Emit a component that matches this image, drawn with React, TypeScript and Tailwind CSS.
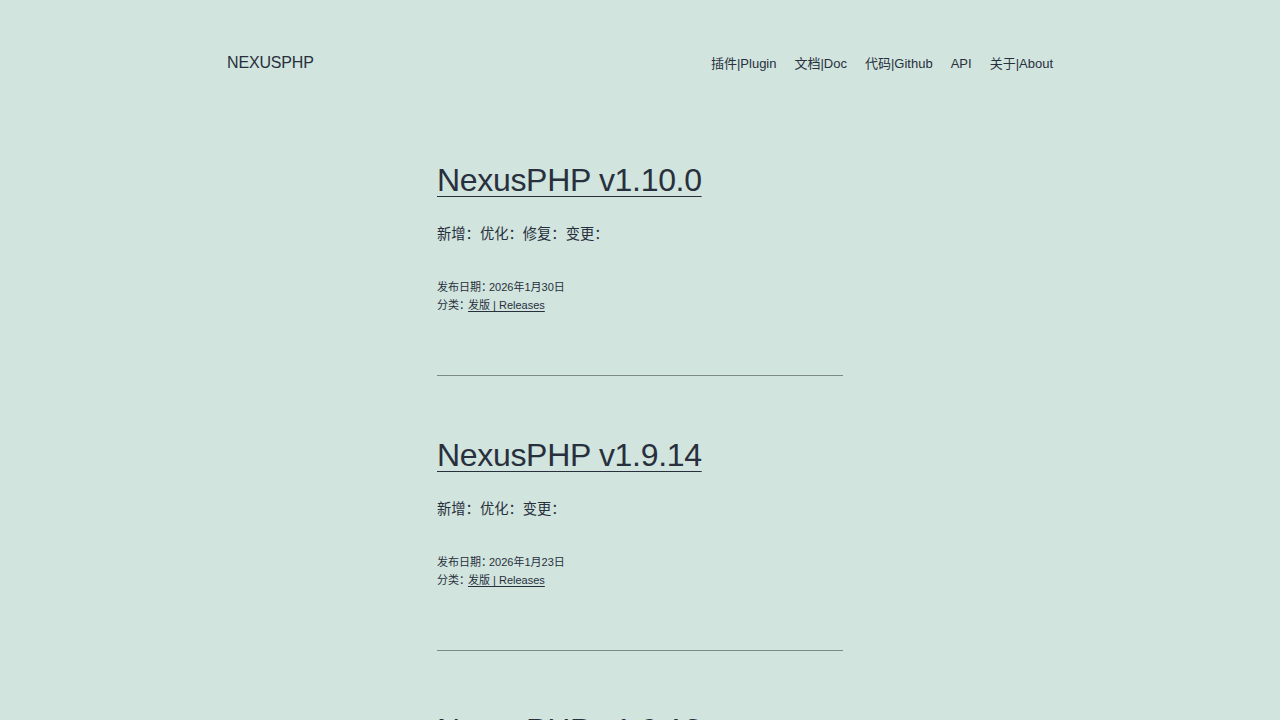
const posts = [
  { title: "NexusPHP v1.10.0", body: "新增：优化：修复：变更：", date: "2026年1月30日" },
  { title: "NexusPHP v1.9.14", body: "新增：优化：变更：", date: "2026年1月23日" },
  { title: "NexusPHP v1.9.13", body: "新增：优化：修复：", date: "2026年1月16日" },
]

const nav = ["插件|Plugin", "文档|Doc", "代码|Github", "API", "关于|About"]

function PostItem({ post }: { post: (typeof posts)[number] }) {
  return (
    <article>
      <h2 className="text-[32px] leading-[40px] tracking-[-0.01em]">
        <a href="#" className="underline decoration-1 underline-offset-[5px]">{post.title}</a>
      </h2>
      <p className="mt-[22px] text-[14.3px] leading-[24px]">{post.body}</p>
      <div className="mt-[32px] text-[11px] leading-[18px]">
        <div>
          发布日期<span className="tracking-[-3px]">：</span>{post.date}
        </div>
        <div>
          分类<span className="tracking-[-2px]">：</span>
          <a href="#" className="underline decoration-1 underline-offset-2">发版 | Releases</a>
        </div>
      </div>
      <hr className="mt-[61px] mb-[59px] border-0 h-px bg-[#7d8a87]" />
    </article>
  )
}

export default function App() {
  return (
    <div className="min-h-screen bg-[#d1e4dd] text-[#28303d] font-['Liberation_Sans','Noto_Sans_CJK_SC',sans-serif]">
      <header className="w-[826px] mx-auto pt-[50px] flex justify-between items-center">
        <a href="#" className="text-[16px] leading-[24px] tracking-[-0.01em]">NEXUSPHP</a>
        <nav className="flex gap-[18px] text-[13px] leading-[24px] mt-[2px]">
          {nav.map((n) => (
            <a key={n} href="#">{n}</a>
          ))}
        </nav>
      </header>
      <main className="w-[406px] mx-auto mt-[84px]">
        {posts.map((p) => (
          <PostItem key={p.title} post={p} />
        ))}
      </main>
    </div>
  )
}
